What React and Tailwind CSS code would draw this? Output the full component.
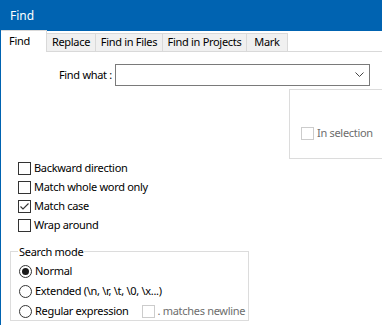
import React from "react"

const font = { fontFamily: '"Noto Sans", "Open Sans", sans-serif' }

function Tab({ label, width, active }) {
  if (active) {
    return (
      <div
        className="relative z-10 -mb-px flex h-[22px] items-start bg-white pl-[8px] pt-[2px] border-t border-r border-[#d9d9d9]"
        style={{ width }}
      >
        {label}
      </div>
    )
  }
  return (
    <div
      className="flex h-[18px] items-center justify-center bg-[#f0f0f0] border-t border-r border-[#d9d9d9]"
      style={{ width }}
    >
      {label}
    </div>
  )
}

function Check({ label, checked, disabled }) {
  return (
    <div className="flex h-[19px] items-center whitespace-nowrap">
      <div
        className={`flex h-[13px] w-[13px] shrink-0 items-center justify-center border bg-white ${
          disabled ? "border-[#cccccc]" : "border-[#333333]"
        }`}
      >
        {checked && (
          <svg width="11" height="11" viewBox="0 0 11 11">
            <path d="M1.5 5.5 L4 8 L9.5 2.5" fill="none" stroke="#333" strokeWidth="1.1" />
          </svg>
        )}
      </div>
      <span className={`ml-[3px] ${disabled ? "text-[#6d6d6d]" : "text-black"}`}>{label}</span>
    </div>
  )
}

function Radio({ label, checked, children }) {
  return (
    <div className="flex h-[20px] items-center whitespace-nowrap">
      <div className="flex h-[13px] w-[13px] shrink-0 items-center justify-center rounded-full border border-[#333333] bg-white">
        {checked && <div className="h-[7px] w-[7px] rounded-full bg-[#1a1a1a]" />}
      </div>
      <span className="ml-[3px]">{label}</span>
      {children}
    </div>
  )
}

export default function App() {
  return (
    <div
      className="relative h-[325px] w-[382px] overflow-hidden border-l border-[#0063b1] bg-white text-[11px] tracking-[-0.3px] text-black"
      style={font}
    >
      {/* title bar */}
      <div className="flex h-[31px] items-center bg-[#0063b1] pl-[9px] text-[12px] tracking-normal text-white">Find</div>

      {/* tabs */}
      <div className="flex h-[21px] items-end border-b border-[#d9d9d9]">
        <Tab label="Find" width={46} active />
        <Tab label="Replace" width={49} />
        <Tab label="Find in Files" width={67} />
        <Tab label="Find in Projects" width={84} />
        <Tab label="Mark" width={41} />
      </div>

      {/* find what */}
      <div className="mt-[12px] flex items-center">
        <div className="w-[114px] pr-[3px] text-right">Find what :</div>
        <div className="flex h-[22px] w-[255px] items-center justify-end border border-[#7a7a7a] pr-[5px]">
          <svg width="9" height="6" viewBox="0 0 9 6">
            <path d="M0.5 0.5 L4.5 4.5 L8.5 0.5" fill="none" stroke="#444" strokeWidth="1" />
          </svg>
        </div>
      </div>

      {/* in selection group */}
      <div className="ml-[288px] mt-[3px] h-[70px] w-[110px] border border-[#dcdcdc] pl-[11px] pt-[34px]">
        <Check label="In selection" disabled />
      </div>

      {/* options */}
      <div className="ml-[17px]">
        <Check label="Backward direction" />
        <Check label="Match whole word only" />
        <Check label="Match case" checked />
        <Check label="Wrap around" />
      </div>

      {/* search mode */}
      <fieldset className="ml-[9px] mt-[9px] h-[77px] w-[239px] border border-[#dcdcdc] pl-[8px]">
        <legend className="ml-[-1px] px-[1px] leading-[15px]">Search mode</legend>
        <div className="mt-[2px]">
          <Radio label="Normal" checked />
          <Radio label="Extended (\n, \r, \t, \0, \x...)" />
          <Radio label="Regular expression">
            <div className="ml-[13px] flex items-center">
              <div className="h-[13px] w-[13px] border border-[#cccccc] bg-white" />
              <span className="ml-[3px] text-[#6d6d6d]">. matches newline</span>
            </div>
          </Radio>
        </div>
      </fieldset>
    </div>
  )
}
